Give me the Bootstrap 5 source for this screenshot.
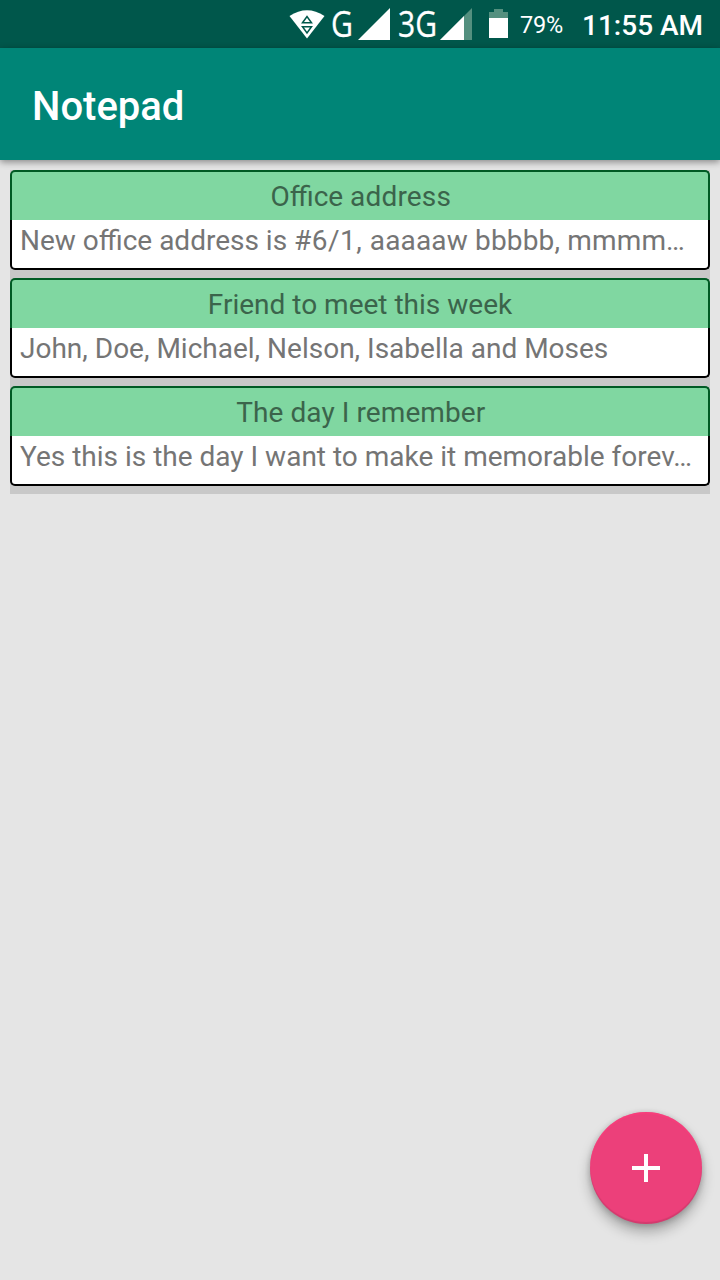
<!DOCTYPE html>
<html lang="en">
<head>
<meta charset="utf-8">
<meta name="viewport" content="width=device-width, initial-scale=1">
<title>Notepad</title>
<link href="https://cdn.jsdelivr.net/npm/bootstrap@5.3.0/dist/css/bootstrap.min.css" rel="stylesheet">
<style>
  body { background: #e5e5e5; font-family: Roboto, "Liberation Sans", sans-serif; height: 1280px; overflow: hidden; }
  .status-bar { height: 48px; background: #00574b; color: #fff; padding-right: 17px; }
  .status-icons { width: 231px; height: 48px; margin-right: 9px; }
  .status-icons text { font-family: "Open Sans", "Noto Sans", sans-serif; fill: #fff; }
  .battery-level { font-size: 23.5px; line-height: 48px; width: 44px; margin-right: 18px; letter-spacing: -.2px; padding-top: 1px; }
  .clock { font-size: 28px; font-weight: 500; line-height: 48px; width: 121px; padding-top: 3px; }
  .app-bar { height: 112px; background: #008577; padding: 6px 32px 0; box-shadow: 0 2px 7px rgba(0,0,0,.42); z-index: 2; }
  .app-title { font-size: 40px; font-weight: 500; line-height: 1; color: #fff; }
  .notes { margin: 10px 10px 0; background: #c8c8c8; }
  .note { height: 100px; font-size: 28px; background: transparent; border: 0; border-radius: 0; }
  .note-wrap { padding-bottom: 8px; }
  .note-title { height: 50px; line-height: 49px; background: #80d7a1; color: #3b644b; border: 2px solid #005a24; border-bottom: 0; border-radius: 5px 5px 0 0; }
  .note-text { height: 50px; line-height: 41px; background: #fff; color: #757575; border: 2px solid #000; border-top: 0; border-radius: 0 0 5px 5px; padding: 0 8px; white-space: nowrap; overflow: hidden; }
  .tracked { letter-spacing: .16px; }
  .tracked-wide { letter-spacing: .5px; }
  .tracked-slight { letter-spacing: .08px; }
  .nudged { padding-left: 1.5px; }
  .fab { right: 18px; bottom: 56px; width: 112px; height: 112px; background: #ec407a; border: 0; box-shadow: 0 8px 13px rgba(0,0,0,.28), 0 1px 6px rgba(0,0,0,.2), inset 0 -2px 1px rgba(0,0,0,.1), inset 0 2px 1px rgba(255,60,125,.6); }
</style>
</head>
<body>
<header class="status-bar d-flex justify-content-end align-items-center">
  <svg class="status-icons flex-shrink-0" viewBox="280 0 231 48" aria-hidden="true">
    <path fill="#fff" d="M289.500 16Q307 4.500 324.500 16L307 38.500Z"/>
    <path fill="none" stroke="#00574b" stroke-width="1.500" d="M302.500 22.800L307 16.500L311.500 22.800ZM302.500 26.700H311.500L307 33Z"/>
    <text x="331" y="36.800" font-size="36" stroke="#fff" stroke-width=".3" textLength="22" lengthAdjust="spacingAndGlyphs">G</text>
    <path fill="#fff" d="M358 40L390 8V40Z"/>
    <text x="398" y="37" font-size="36" stroke="#fff" stroke-width=".3" textLength="39" lengthAdjust="spacingAndGlyphs">3G</text>
    <path fill="#54907f" d="M440 40L472 8V40Z"/>
    <path fill="#fff" d="M440 40L464 16V40Z"/>
    <path fill="#54907f" d="M494 9H503V12H508V18H489V12H494Z"/>
    <path fill="#fff" d="M489 18H508V38H489Z"/>
  </svg>
  <span class="battery-level text-nowrap">79%</span>
  <span class="clock text-nowrap">11:55 AM</span>
</header>
<nav class="app-bar navbar position-relative">
  <h1 class="app-title m-0">Notepad</h1>
</nav>
<main class="notes">
  <div class="note-wrap"><article class="note card">
    <div class="note-title text-center nudged">Office <span class="tracked">address</span></div>
    <div class="note-text">New office address is <span class="tracked-wide">#6/1, </span><span class="tracked">aaaaaw bbbbb, mmmm…</span></div>
  </article></div>
  <div class="note-wrap"><article class="note card">
    <div class="note-title text-center">Friend to meet this week</div>
    <div class="note-text">John, Doe, Michael, Nelson, Isabella and Moses</div>
  </article></div>
  <div class="note-wrap"><article class="note card">
    <div class="note-title text-center tracked-slight nudged">The day I remember</div>
    <div class="note-text">Yes this is the day I want to make it memorable forev…</div>
  </article></div>
</main>
<button class="fab btn rounded-circle position-fixed p-0 d-flex align-items-center justify-content-center" type="button" aria-label="Add note">
  <svg width="28" height="28" viewBox="0 0 28 28"><path fill="#fff" d="M12 0H16V12H28V16H16V28H12V16H0V12H12Z"/></svg>
</button>
<script src="https://cdn.jsdelivr.net/npm/bootstrap@5.3.0/dist/js/bootstrap.bundle.min.js"></script>
</body>
</html>
